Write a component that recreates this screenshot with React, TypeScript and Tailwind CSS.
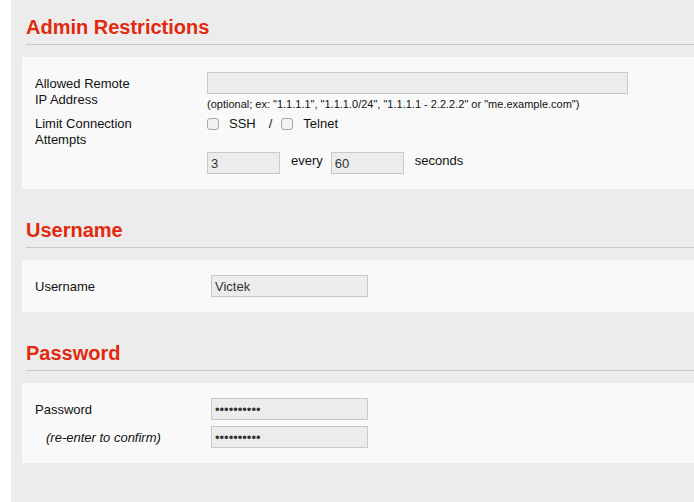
import React from "react";

const inputCls =
  "h-[22px] border border-[#c8c8c8] bg-[#ececec] px-[3px] text-[13px] text-[#333] outline-none";

function Section({
  title,
  className,
  children,
}: {
  title: string;
  className?: string;
  children: React.ReactNode;
}) {
  return (
    <section className={className}>
      <h2 className="ml-[15px] border-b border-[#c8c8c8] pb-[5px] text-[20px] font-bold leading-[24px] text-[#e2290d]">
        {title}
      </h2>
      <div className="ml-[11px] mt-[12px] bg-[#f9f9f9] px-[13px] pt-[15px] pb-[15px]">{children}</div>
    </section>
  );
}

function Check() {
  return (
    <input
      type="checkbox"
      className="h-[12px] w-[12px] appearance-none rounded-[3px] border border-[#a8a8a8] bg-[#f2f2f2]"
    />
  );
}

export default function App() {
  return (
    <div className="min-h-screen bg-white pl-[11px] font-['Liberation_Sans',Arial,sans-serif] text-[13px] leading-4 text-[#111]">
      <div className="min-h-screen overflow-hidden bg-[#ececec] pt-[15px]">
        <Section title="Admin Restrictions">
          {/* allowed ip */}
          <div className="flex">
            <div className="w-[172px] pt-[4px]">
              Allowed Remote
              <br />
              IP Address
            </div>
            <div>
              <input className={`${inputCls} w-[421px]`} defaultValue="" />
              <div className="mt-[3px] text-[11px] leading-[14px] text-[#111]">
                (optional; ex: "1.1.1.1", "1.1.1.0/24", "1.1.1.1 - 2.2.2.2" or "me.example.com")
              </div>
            </div>
          </div>

          {/* connection attempts */}
          <div className="flex">
            <div className="w-[172px] pt-[5px]">
              Limit Connection
              <br />
              Attempts
            </div>
            <div className="box-content flex h-[16px] items-center pt-[5px]">
              <Check />
              <span className="ml-[10px]">SSH</span>
              <span className="ml-[13px]">/</span>
              <span className="ml-[9px] flex items-center">
                <Check />
              </span>
              <span className="ml-[10px]">Telnet</span>
            </div>
          </div>

          <div className="mt-[4px] flex pl-[172px]">
            <input className={`${inputCls} w-[73px]`} defaultValue="3" />
            <span className="ml-[11px] pt-[1px]">every</span>
            <input className={`${inputCls} ml-[8px] w-[73px]`} defaultValue="60" />
            <span className="ml-[11px] pt-[1px]">seconds</span>
          </div>
        </Section>

        <Section title="Username" className="mt-[29px]">
          <div className="flex">
            <div className="w-[176px] pt-[4px]">Username</div>
            <input className={`${inputCls} w-[157px]`} defaultValue="Victek" />
          </div>
        </Section>

        <Section title="Password" className="mt-[29px]">
          <div className="flex">
            <div className="w-[176px] pt-[4px]">Password</div>
            <input type="password" className={`${inputCls} w-[157px]`} defaultValue="0123456789" />
          </div>
          <div className="mt-[6px] flex">
            <div className="w-[176px] pl-[11px] pt-[4px] italic">(re-enter to confirm)</div>
            <input type="password" className={`${inputCls} w-[157px]`} defaultValue="0123456789" />
          </div>
        </Section>
      </div>
    </div>
  );
}
